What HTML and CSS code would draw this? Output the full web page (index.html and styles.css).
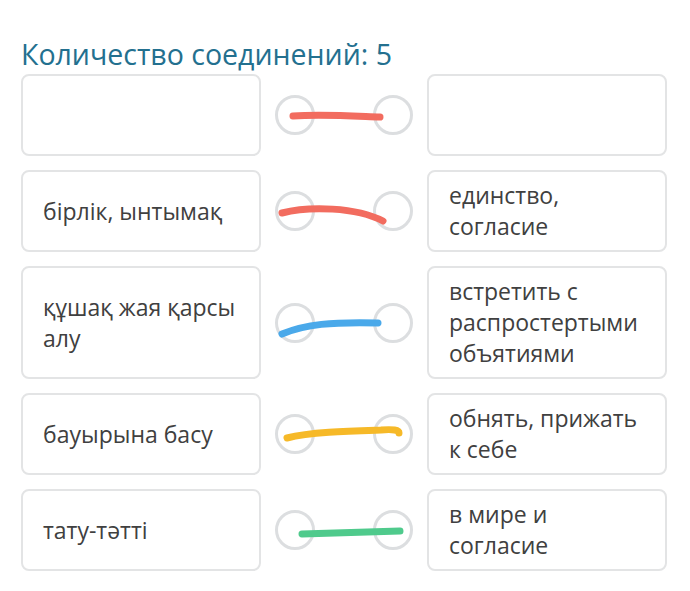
FILE: index.html
```html
<!DOCTYPE html>
<html lang="ru">
<head>
	<meta charset="UTF-8">
	<meta name="viewport" content="width=device-width, initial-scale=1.0">
	<title>Количество соединений</title>
	<link rel="stylesheet" href="styles.css">
</head>
<body>
	<div class="page">
		<div class="count">Количество соединений: 5</div>
		<div class="pairs">
			<div class="pair">
				<div class="card"></div>
				<div class="link">
					<span class="dot"></span>
					<span class="dot"></span>
					<svg class="line" viewBox="0 0 166 40"><path d="M32 21 C60 19, 92 21, 119 22" stroke="#f26c5f"/></svg>
				</div>
				<div class="card"></div>
			</div>
			<div class="pair">
				<div class="card">бірлік, ынтымақ</div>
				<div class="link">
					<span class="dot"></span>
					<span class="dot"></span>
					<svg class="line" viewBox="0 0 166 40"><path d="M21 22 C48 15, 95 16, 122 30" stroke="#f26c5f"/></svg>
				</div>
				<div class="card">единство, согласие</div>
			</div>
			<div class="pair">
				<div class="card">құшақ жая қарсы алу</div>
				<div class="link">
					<span class="dot"></span>
					<span class="dot"></span>
					<svg class="line" viewBox="0 0 166 40"><path d="M21 31 C45 21, 70 19, 117 20" stroke="#4aa9ea"/></svg>
				</div>
				<div class="card">встретить с распростертыми объятиями</div>
			</div>
			<div class="pair">
				<div class="card">бауырына басу</div>
				<div class="link">
					<span class="dot"></span>
					<span class="dot"></span>
					<svg class="line" viewBox="0 0 166 40"><path d="M26 24 C50 18, 90 17, 120 16 C132 15, 138 16, 138 19" stroke="#f6b928"/></svg>
				</div>
				<div class="card">обнять, прижать к себе</div>
			</div>
			<div class="pair">
				<div class="card">тату-тәтті</div>
				<div class="link">
					<span class="dot"></span>
					<span class="dot"></span>
					<svg class="line" viewBox="0 0 166 40"><path d="M41 24 C80 23, 110 22, 139 21" stroke="#4fca8c"/></svg>
				</div>
				<div class="card">в мире и согласие</div>
			</div>
		</div>
	</div>
</body>
</html>
```

FILE: styles.css
```css
body {
	margin: 0;
	background: #fff;
	font-family: "Open Sans", "Noto Sans", sans-serif;
}
.page {
	padding: 36px 21px 20px;
}
.count {
	font-size: 28.5px;
	line-height: 36px;
	color: #23708f;
	margin-bottom: 2px;
}
.pairs {
	display: flex;
	flex-direction: column;
	gap: 14px;
}
.pair {
	display: grid;
	grid-template-columns: 240px 166px 240px;
}
.card {
	border: 2px solid #e3e4e5;
	border-radius: 8px;
	padding: 8px 14px 8px 20px;
	min-height: 62px;
	display: flex;
	align-items: center;
	font-size: 23px;
	line-height: 31px;
	color: #404040;
}
.link {
	position: relative;
	display: flex;
	justify-content: space-between;
	align-items: center;
	padding: 0 14px;
}
.dot {
	width: 40px;
	height: 40px;
	box-sizing: border-box;
	border: 3px solid #dcdee0;
	border-radius: 50%;
}
.line {
	position: absolute;
	left: 0;
	top: 50%;
	width: 166px;
	height: 40px;
	margin-top: -20px;
	overflow: visible;
}
.line path {
	fill: none;
	stroke-width: 7;
	stroke-linecap: round;
}
```
